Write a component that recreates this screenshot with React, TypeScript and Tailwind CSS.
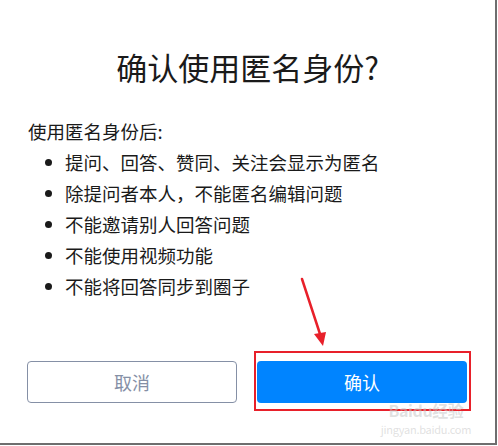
const items = [
  "提问、回答、赞同、关注会显示为匿名",
  "除提问者本人，不能匿名编辑问题",
  "不能邀请别人回答问题",
  "不能使用视频功能",
  "不能将回答同步到圈子",
];

export default function App() {
  return (
    <div className="w-[498px] h-[446px] bg-white font-['Noto_Sans_CJK_SC','Noto_Sans',sans-serif] text-[#1a1a1a]">
      <div className="relative w-[497px] h-[445px] border-r-2 border-b-2 border-[#6e6e6e] flex flex-col">
        <h1 className="pt-[47px] text-center text-[31px] leading-[40px] font-normal">
          确认使用匿名身份?
        </h1>

        <div className="mt-[29px] pl-[28px] text-[18.5px] leading-[31px]">
          <p>使用匿名身份后:</p>
          <ul>
            {items.map((item) => (
              <li key={item} className="flex items-center">
                <span className="ml-[17px] mr-[13px] w-[7px] h-[7px] rounded-full bg-[#1a1a1a]" />
                {item}
              </li>
            ))}
          </ul>
        </div>

        <div className="mt-[59px] pl-[27px] flex gap-[20px]">
          <button className="w-[210px] h-[42px] rounded-[4px] border border-[#8590a6] text-[#8590a6] text-[18px]">
            取消
          </button>
          <button className="w-[210px] h-[42px] rounded-[4px] bg-[#0084ff] text-white text-[18px]">
            确认
          </button>
        </div>

        {/* 标注：红框和箭头 */}
        <div className="absolute left-[254px] top-[351px] w-[217px] h-[60px] border-2 border-[#e8202a]" />
        <svg className="absolute left-[290px] top-[272px]" width="50" height="80" viewBox="0 0 50 80">
          <line x1="12" y1="7" x2="30" y2="62" stroke="#e8202a" strokeWidth="2.5" strokeLinecap="round" />
          <polygon points="24,62 36,60 33,74" fill="#e8202a" />
        </svg>

        {/* 水印 */}
        <div className="absolute left-[380px] top-[402px] w-[92px] flex flex-col items-center gap-[6px] text-[rgba(200,200,200,0.55)]">
          <span className="text-[16px] leading-[16px] font-bold tracking-tight">Baidu经验</span>
          <span className="text-[11px] leading-[11px] tracking-tight">jingyan.baidu.com</span>
        </div>
      </div>
    </div>
  );
}
